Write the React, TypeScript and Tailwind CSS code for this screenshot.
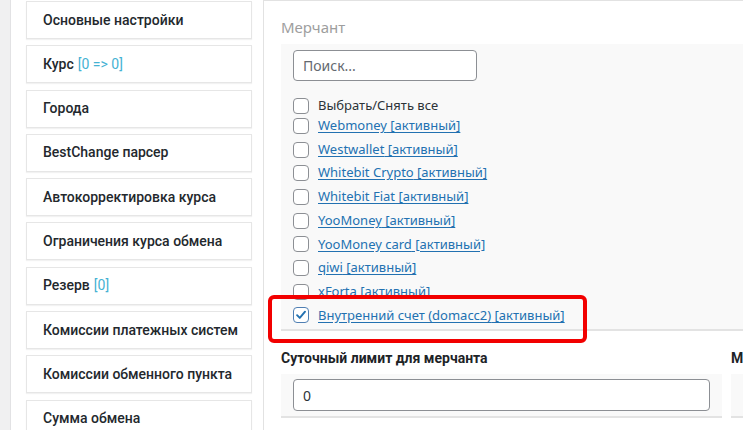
const MENU: { label: string; extra?: string }[] = [
  { label: "Основные настройки" },
  { label: "Курс", extra: "[0 => 0]" },
  { label: "Города" },
  { label: "BestChange парсер" },
  { label: "Автокорректировка курса" },
  { label: "Ограничения курса обмена" },
  { label: "Резерв", extra: "[0]" },
  { label: "Комиссии платежных систем" },
  { label: "Комиссии обменного пункта" },
  { label: "Сумма обмена" },
];

const MERCHANTS = [
  "Webmoney",
  "Westwallet",
  "Whitebit Crypto",
  "Whitebit Fiat",
  "YooMoney",
  "YooMoney card",
  "qiwi",
  "xForta",
  "Внутренний счет (domacc2)",
];

function Checkbox({ checked = false }: { checked?: boolean }) {
  return (
    <span
      className={
        "flex size-4 shrink-0 items-center justify-center rounded-[4px] border bg-white " +
        (checked ? "border-[#4f7fb3]" : "border-[#8c8f94]")
      }
    >
      {checked && (
        <svg viewBox="0 0 16 16" className="size-[14px]" aria-hidden>
          <path d="M3.5 8.2 L6.6 11.3 L12.6 4.2" fill="none" stroke="#2271b1" strokeWidth="2.2" strokeLinecap="round" strokeLinejoin="round" />
        </svg>
      )}
    </span>
  );
}

export default function App() {
  return (
    <div className="relative flex h-[430px] w-[743px] overflow-hidden bg-white font-['Roboto',sans-serif]">
      <div className="w-[11px] shrink-0 border-r border-[#e2e2e4] bg-[#f0f0f1]" />

      {/* settings menu */}
      <aside className="flex w-[241px] shrink-0 flex-col pl-[15px] pt-[1px]">
        {MENU.map((item) => (
          <div
            key={item.label}
            className="mb-[6.3px] flex h-[38px] shrink-0 items-center border border-[#e6e6e6] bg-white pl-[16px] text-[14px] font-medium text-[#23282d] shadow-[0_1px_1px_rgba(0,0,0,0.05)]"
          >
            {item.label}
            {item.extra && <span className="ml-[4px] font-normal text-[#45b2d3]">{item.extra}</span>}
          </div>
        ))}
      </aside>

      {/* main panel */}
      <main className="ml-[11px] flex min-w-0 flex-1 flex-col border-l border-t border-[#e2e2e2] pl-[17px]">
        <div className="flex h-[43px] shrink-0 items-center pt-[9px] font-['Noto_Sans',sans-serif] text-[15px] text-[#9e9e9e]">
          Мерчант
        </div>

        <section className="shrink-0 border-b-2 border-[#e3e3e3] bg-[#f9f9f9] px-[12px] pb-[2px] pt-[6px] font-['Noto_Sans',sans-serif] text-[13px]">
          <div className="flex h-[31px] w-[184px] items-center rounded-[4px] border border-[#8c8f94] bg-white pl-[9px] text-[14px] text-[#646970]">
            Поиск...
          </div>
          <label className="mt-[16px] flex h-[17px] items-center gap-[9px] text-[#2c3338]">
            <Checkbox />
            Выбрать/Снять все
          </label>
          <div className="flex flex-col">
            {MERCHANTS.map((name, i) => (
              <div key={name} className="flex h-[23.7px] items-center gap-[9px]">
                <Checkbox checked={i === MERCHANTS.length - 1} />
                <a className="text-[#2271b1] underline underline-offset-2">{name} [активный]</a>
              </div>
            ))}
          </div>
        </section>

        <div className="mt-[10px] flex gap-[9px]">
          <div className="flex w-[441px] shrink-0 flex-col">
            <div className="flex h-[33px] items-center pt-[2px] text-[14px] font-bold text-[#1d2327]">Суточный лимит для мерчанта</div>
            <div className="border-b-2 border-[#e3e3e3] bg-[#f9f9f9] px-[12px] py-[5px]">
              <div className="flex h-[32px] items-center rounded-[4px] border border-[#8c8f94] bg-white pl-[9px] font-['Noto_Sans',sans-serif] text-[14px] text-[#2c3338]">
                0
              </div>
            </div>
          </div>
          <div className="flex min-w-0 flex-1 flex-col">
            <div className="flex h-[33px] items-center overflow-hidden whitespace-nowrap pt-[2px] text-[14px] font-bold text-[#1d2327]">М</div>
            <div className="h-[44px] border-b-2 border-[#e3e3e3] bg-[#f9f9f9]" />
          </div>
        </div>
      </main>

      {/* annotation */}
      <div className="pointer-events-none absolute left-[268px] top-[295px] h-[48px] w-[319px] rounded-[6px] border-4 border-[#f20000]" />
    </div>
  );
}
